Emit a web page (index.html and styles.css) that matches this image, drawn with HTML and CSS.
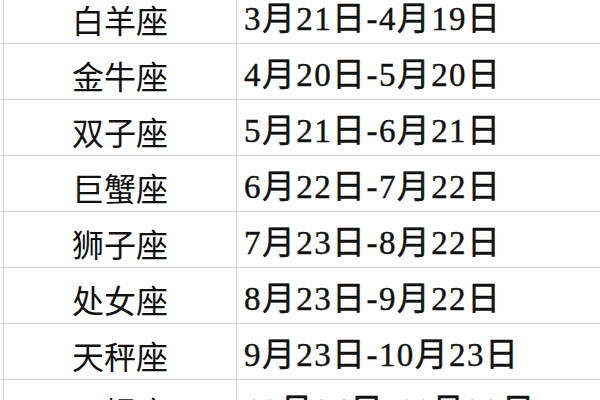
FILE: index.html
```html
<!DOCTYPE html>
<html lang="zh-CN">
<head>
<meta charset="utf-8">
<title>星座日期表</title>
<link rel="stylesheet" href="styles.css">
</head>
<body>
<div class="sheet">
  <div class="row"><div class="edge"></div><div class="name">白羊座</div><div class="date">3月21日-4月19日</div></div>
  <div class="row"><div class="edge"></div><div class="name">金牛座</div><div class="date">4月20日-5月20日</div></div>
  <div class="row"><div class="edge"></div><div class="name">双子座</div><div class="date">5月21日-6月21日</div></div>
  <div class="row"><div class="edge"></div><div class="name">巨蟹座</div><div class="date">6月22日-7月22日</div></div>
  <div class="row"><div class="edge"></div><div class="name">狮子座</div><div class="date">7月23日-8月22日</div></div>
  <div class="row"><div class="edge"></div><div class="name">处女座</div><div class="date">8月23日-9月22日</div></div>
  <div class="row"><div class="edge"></div><div class="name">天秤座</div><div class="date">9月23日-10月23日</div></div>
  <div class="row"><div class="edge"></div><div class="name">天蝎座</div><div class="date">10月24日-11月22日</div></div>
</div>
</body>
</html>
```

FILE: styles.css
```css
html, body {
  margin: 0;
  padding: 0;
  background: #ffffff;
  overflow: hidden;
}

.sheet {
  margin-top: -12px;
  width: 600px;
}

.row {
  display: grid;
  grid-template-columns: 4px 233px 1fr;
  height: 56px;
  border-bottom: 1px solid #d4d4d4;
  box-sizing: border-box;
}

.edge {
  border-right: 1px solid #d4d4d4;
}

.name {
  border-right: 1px solid #d4d4d4;
  text-align: center;
  font-family: "Noto Sans CJK SC", sans-serif;
  font-size: 32px;
  line-height: 56px;
  padding-top: 3px;
  color: #111111;
}

.date {
  font-family: "Liberation Serif", "Noto Sans CJK SC", serif;
  font-size: 33px;
  line-height: 56px;
  padding-top: 3px;
  padding-left: 7px;
  letter-spacing: 1.4px;
  color: #111111;
  -webkit-text-stroke: 0.4px #111111;
  white-space: nowrap;
}
```
